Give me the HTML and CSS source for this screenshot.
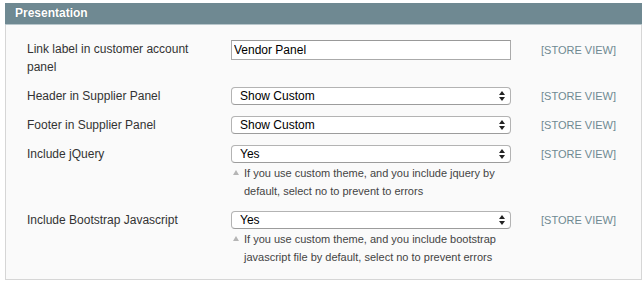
FILE: index.html
```html
<!DOCTYPE html>
<html>
<head>
<meta charset="utf-8">
<link rel="stylesheet" href="styles.css">
</head>
<body>
<div class="section">
  <div class="section-head">Presentation</div>
  <div class="section-body">
    <div class="row row-text">
      <div class="label">Link label in customer account panel</div>
      <div class="field"><input class="input-text" type="text" value="Vendor Panel"></div>
      <div class="scope">[STORE VIEW]</div>
    </div>
    <div class="row">
      <div class="label">Header in Supplier Panel</div>
      <div class="field">
        <div class="select-wrap">
          <select class="select"><option>Show Custom</option></select>
          <svg class="arrows" width="6" height="10" viewBox="0 0 6 10"><polygon points="0,4 3,0 6,4" /><polygon points="0,6 6,6 3,10" /></svg>
        </div>
      </div>
      <div class="scope">[STORE VIEW]</div>
    </div>
    <div class="row">
      <div class="label">Footer in Supplier Panel</div>
      <div class="field">
        <div class="select-wrap">
          <select class="select"><option>Show Custom</option></select>
          <svg class="arrows" width="6" height="10" viewBox="0 0 6 10"><polygon points="0,4 3,0 6,4" /><polygon points="0,6 6,6 3,10" /></svg>
        </div>
      </div>
      <div class="scope">[STORE VIEW]</div>
    </div>
    <div class="row">
      <div class="label">Include jQuery</div>
      <div class="field">
        <div class="select-wrap">
          <select class="select"><option>Yes</option></select>
          <svg class="arrows" width="6" height="10" viewBox="0 0 6 10"><polygon points="0,4 3,0 6,4" /><polygon points="0,6 6,6 3,10" /></svg>
        </div>
        <p class="note">If you use custom theme, and you include jquery by default, select no to prevent to errors</p>
      </div>
      <div class="scope">[STORE VIEW]</div>
    </div>
    <div class="row">
      <div class="label">Include Bootstrap Javascript</div>
      <div class="field">
        <div class="select-wrap">
          <select class="select"><option>Yes</option></select>
          <svg class="arrows" width="6" height="10" viewBox="0 0 6 10"><polygon points="0,4 3,0 6,4" /><polygon points="0,6 6,6 3,10" /></svg>
        </div>
        <p class="note">If you use custom theme, and you include bootstrap javascript file by default, select no to prevent errors</p>
      </div>
      <div class="scope">[STORE VIEW]</div>
    </div>
  </div>
</div>
</body>
</html>
```

FILE: styles.css
```css
html, body {
  margin: 0;
  padding: 0;
  background: #fff;
}
body {
  font-family: "Liberation Sans", Arial, Helvetica, sans-serif;
  font-size: 12px;
  color: #333;
}
.section {
  margin: 3px 0 0 5px;
  width: 637px;
}
.section-head {
  background: #6f8992;
  color: #fff;
  font-weight: bold;
  font-size: 12px;
  height: 21px;
  line-height: 21px;
  padding: 0 10px;
  border-bottom: 1px solid #b8c6cb;
  text-shadow: 0 0 1px rgba(0,0,0,0.25);
}
.section-body {
  background: #fafafa;
  border: 1px solid #d6d6d6;
  border-top: none;
  padding: 15px 0 13px 21px;
  display: flex;
  flex-direction: column;
  gap: 11px;
}
.row {
  display: flex;
  align-items: flex-start;
}
.label {
  width: 185px;
  margin-right: 19px;
  line-height: 18px;
  color: #333;
}
.row-text .label {
  line-height: 17.5px;
  padding-top: 1px;
}
.field {
  width: 280px;
}
.scope {
  margin-left: 30px;
  font-size: 11px;
  line-height: 18px;
  color: #6f8992;
}
.row-text .scope {
  line-height: 20px;
}
.input-text {
  display: block;
  box-sizing: border-box;
  width: 280px;
  height: 20px;
  margin: 0;
  padding: 0 2px;
  border: 1px solid #aaa;
  border-top-color: #999;
  background: #fff;
  font-family: "Liberation Sans", Arial, sans-serif;
  font-size: 12px;
  color: #000;
  outline: none;
}
.select-wrap {
  position: relative;
  width: 280px;
  height: 18px;
}
.select {
  display: block;
  box-sizing: border-box;
  width: 280px;
  height: 18px;
  margin: 0;
  padding: 0 0 0 8px;
  border: 1px solid #b3b3b3;
  border-bottom-color: #9c9c9c;
  border-radius: 4px;
  background: #fff;
  -webkit-appearance: none;
  appearance: none;
  font-family: "Liberation Sans", Arial, sans-serif;
  font-size: 12px;
  line-height: 16px;
  color: #000;
  outline: none;
}
.arrows {
  position: absolute;
  right: 6px;
  top: 4px;
  fill: #222;
  pointer-events: none;
}
.note {
  position: relative;
  margin: 1px 0 0 0;
  padding-left: 13px;
  font-size: 11px;
  line-height: 18px;
  color: #444;
}
.note::before {
  content: "";
  position: absolute;
  left: 2px;
  top: 6px;
  width: 0;
  height: 0;
  border-left: 3px solid transparent;
  border-right: 3px solid transparent;
  border-bottom: 5px solid #b5b5b5;
}
```
